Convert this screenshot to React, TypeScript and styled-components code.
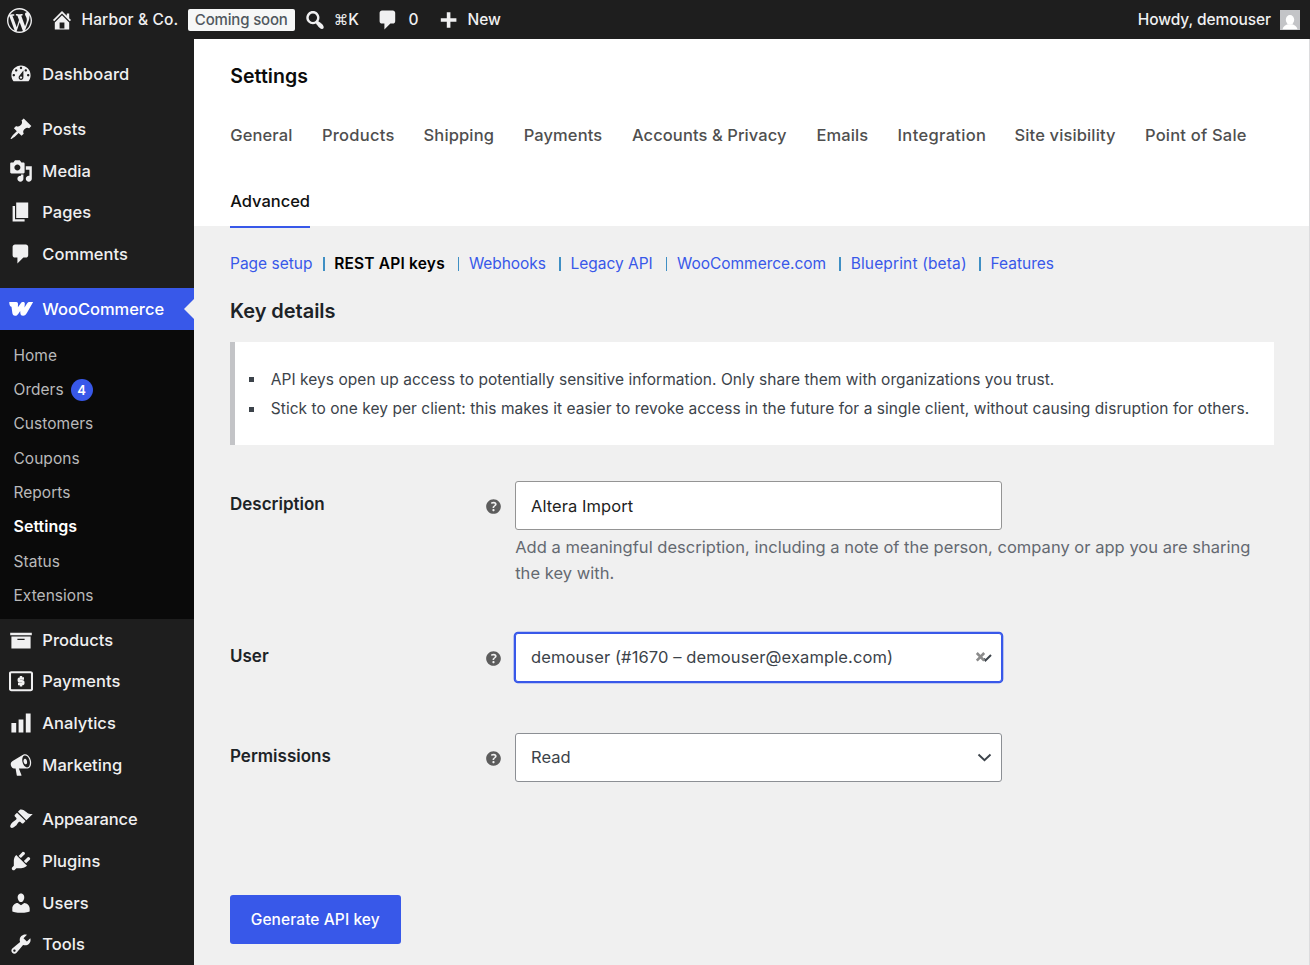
import React from 'react';
import styled, { createGlobalStyle, css } from 'styled-components';

const GlobalStyle = createGlobalStyle`
  *, *::before, *::after { box-sizing: border-box; }
  body {
    margin: 0;
    background: #f0f0f0;
    color: #3c434a;
    font-family: Inter, "Liberation Sans", "DejaVu Sans", sans-serif;
    font-size: 16px;
    -webkit-font-smoothing: antialiased;
  }
  ul { list-style: none; margin: 0; padding: 0; }
  h1, h2, p { margin: 0; }
  a { color: inherit; text-decoration: none; }
`;

/* ---------- icons ---------- */

const paths = {
  wordpress:
    'M20 10c0-5.51-4.49-10-10-10C4.48 0 0 4.49 0 10c0 5.52 4.48 10 10 10 5.51 0 10-4.48 10-10zM7.78 15.37L4.37 6.22c.55-.02 1.17-.08 1.17-.08.5-.06.44-1.13-.06-1.11 0 0-1.45.11-2.37.11-.18 0-.37 0-.58-.01C4.12 2.69 6.87 1.11 10 1.11c2.33 0 4.45.87 6.05 2.34-.68-.11-1.65.39-1.65 1.58 0 .74.45 1.36.9 2.1.35.61.55 1.36.55 2.46 0 1.49-1.4 5-1.4 5l-3.03-8.37c.54-.02.82-.17.82-.17.5-.05.44-1.25-.06-1.22 0 0-1.44.12-2.38.12-.87 0-2.33-.12-2.33-.12-.5-.03-.56 1.2-.06 1.22l.92.08 1.26 3.41zM17.41 10c.24-.64.74-1.87.43-4.25.7 1.29 1.05 2.71 1.05 4.25 0 3.29-1.73 6.24-4.4 7.78.97-2.59 1.94-5.2 2.92-7.78zM6.1 18.09C3.12 16.65 1.11 13.53 1.11 10c0-1.3.23-2.48.72-3.59C3.25 10.3 4.67 14.2 6.1 18.09zm4.03-6.63l2.58 6.98c-.86.29-1.76.45-2.71.45-.79 0-1.57-.11-2.29-.33.81-2.38 1.62-4.74 2.42-7.1z',
  home: 'M16 8.5l1.53 1.53-1.06 1.06L10 4.6l-6.47 6.49-1.06-1.06L10 2.5l4 4v-2h2v4zm-6-2.46l6 5.99V18H4v-5.97zM12 17v-5H8v5h4z',
  search:
    'M12.14 4.18c1.87 1.87 2.11 4.75.72 6.89.12.1.22.21.36.31.2.16.47.36.81.59.34.24.56.39.66.47.42.31.73.57.94.78.32.32.6.65.84 1 .25.35.44.69.59 1.04.14.35.21.68.18 1-.02.32-.14.59-.36.81s-.49.34-.81.36c-.31.02-.65-.04-.99-.19-.35-.14-.7-.34-1.04-.59-.35-.24-.68-.52-1-.84-.21-.21-.47-.52-.77-.93-.1-.13-.25-.35-.47-.66-.22-.32-.4-.57-.56-.78-.16-.2-.29-.35-.44-.5-2.07 1.09-4.69.76-6.44-.98-2.14-2.15-2.14-5.64 0-7.78 2.15-2.15 5.63-2.15 7.78 0zm-1.41 6.36c1.36-1.37 1.36-3.58 0-4.95-1.37-1.37-3.59-1.37-4.95 0-1.37 1.37-1.37 3.58 0 4.95 1.36 1.37 3.58 1.37 4.95 0z',
  comments: 'M5 2h9c1.1 0 2 .9 2 2v7c0 1.1-.9 2-2 2h-2l-5 5v-5H5c-1.1 0-2-.9-2-2V4c0-1.1.9-2 2-2z',
  plus: 'M17 8.5v3h-5v5H9v-5H4v-3h5v-5h3v5h5z',
  dashboard:
    'M3.76 16h12.48c1.1-1.37 1.76-3.11 1.76-5 0-4.42-3.58-8-8-8s-8 3.58-8 8c0 1.89.66 3.63 1.76 5zM10 4c.55 0 1 .45 1 1s-.45 1-1 1-1-.45-1-1 .45-1 1-1zM6 6c.55 0 1 .45 1 1s-.45 1-1 1-1-.45-1-1 .45-1 1-1zm8 0c.55 0 1 .45 1 1s-.45 1-1 1-1-.45-1-1 .45-1 1-1zm-5.37 5.55L12 7v6c0 1.1-.9 2-2 2s-2-.9-2-2c0-.57.24-1.08.63-1.45zM4 10c.55 0 1 .45 1 1s-.45 1-1 1-1-.45-1-1 .45-1 1-1zm12 0c.55 0 1 .45 1 1s-.45 1-1 1-1-.45-1-1 .45-1 1-1zm-5 3c0-.55-.45-1-1-1s-1 .45-1 1 .45 1 1 1 1-.45 1-1z',
  posts:
    'M10.44 3.02l1.82-1.82 6.36 6.35-1.83 1.82c-1.05-.68-2.48-.57-3.41.36l-.75.75c-.92.93-1.04 2.35-.35 3.41l-1.83 1.82-2.41-2.41-2.8 2.79c-.42.42-3.38 2.71-3.8 2.29s1.86-3.39 2.28-3.81l2.79-2.79L4.1 9.36l1.83-1.82c1.05.69 2.48.57 3.4-.36l.75-.75c.93-.92 1.05-2.35.36-3.41z',
  media:
    'M13 11V4c0-.55-.45-1-1-1h-1.67L9 1H5L3.67 3H2c-.55 0-1 .45-1 1v7c0 .55.45 1 1 1h10c.55 0 1-.45 1-1zM7 4.5c1.38 0 2.5 1.12 2.5 2.5S8.38 9.5 7 9.5 4.5 8.38 4.5 7 5.62 4.5 7 4.5zM14 6h5v10.5c0 1.38-1.12 2.5-2.5 2.5S14 17.88 14 16.5s1.12-2.5 2.5-2.5c.17 0 .34.02.5.05V9h-3V6zm-4 8.05V13h2v3.5c0 1.38-1.12 2.5-2.5 2.5S7 17.88 7 16.5 8.12 14 9.5 14c.17 0 .34.02.5.05z',
  pages: 'M6 15V2h10v13H6zm-1 1h8v2H3V5h2v11z',
  products: 'M19 4v2H1V4h18zM2 7h16v10H2V7zm11 3V9H7v1h6z',
  analytics: 'M18 18V2h-4v16h4zm-6 0V7H8v11h4zm-6 0v-8H2v8h4z',
  marketing:
    'M18.15 5.94c.46 1.62.38 3.22-.02 4.48-.42 1.28-1.26 2.18-2.3 2.48-.16.06-.26.06-.4.06-.06.02-.12.02-.18.02-.06.02-.14.02-.22.02h-6.8l2.22 5.5c.02.14-.06.26-.14.34-.08.1-.24.16-.34.16H6.95c-.1 0-.26-.06-.34-.16-.08-.08-.16-.2-.14-.34l-1-5.5H4.25l-.02-.02c-.5.06-1.08-.18-1.54-.62s-.88-1.08-1.06-1.88c-.24-.8-.2-1.56-.02-2.2.18-.62.58-1.08 1.06-1.3l.02-.02 9-5.4c.1-.06.18-.1.24-.16.06-.04.14-.08.24-.12.16-.08.28-.12.5-.18 1.04-.3 2.24.1 3.22.98s1.84 2.24 2.26 3.86zm-2.58 5.98h-.02c.4-.1.74-.34 1.04-.7.58-.7.86-1.76.86-3.04 0-.64-.1-1.3-.28-1.98-.34-1.36-1.02-2.5-1.78-3.24s-1.68-1.1-2.46-.88c-.82.22-1.4.96-1.7 2-.32 1.04-.28 2.36.06 3.72.38 1.36 1 2.5 1.8 3.24.78.74 1.62 1.1 2.48.88zm-2.54-7.08c.22-.04.42-.02.62.04.38.16.76.48 1.02 1s.42 1.2.42 1.78c0 .3-.04.56-.12.8-.18.48-.44.84-.86.94-.34.1-.8-.06-1.14-.4s-.64-.86-.78-1.5c-.18-.62-.12-1.24.02-1.72s.48-.84.82-.94z',
  appearance:
    'M14.48 11.06L7.41 3.99l1.5-1.5c.5-.56 2.3-.47 3.51.32 1.21.8 1.43 1.28 2.91 2.1 1.18.64 2.45 1.26 4.45.85zm-.71.71L6.7 4.7 4.93 6.47c-.39.39-.39 1.02 0 1.41l1.06 1.06c.39.39.39 1.03 0 1.42-.6.6-1.43 1.11-2.21 1.69-.35.26-.7.53-1.01.84C1.43 14.23.4 16.08 1.4 17.07c.99 1 2.84-.03 4.18-1.36.31-.31.58-.66.85-1.02.57-.78 1.08-1.61 1.69-2.21.39-.39 1.02-.39 1.41 0l1.06 1.06c.39.39 1.02.39 1.41 0z',
  plugins:
    'M13.11 4.36L9.87 7.6 8 5.73l3.24-3.24c.35-.34 1.05-.2 1.56.32.52.51.66 1.21.31 1.55zm-8 1.77l.91-1.12 9.01 9.01-1.19.84c-.71.71-2.63 1.16-3.82 1.16H6.14L4.9 17.26c-.59.59-1.54.59-2.12 0-.59-.58-.59-1.53 0-2.12l1.24-1.24v-3.88c0-1.13.4-3.19 1.09-3.89zm7.26 3.97l3.24-3.24c.34-.35 1.04-.21 1.55.31.52.51.66 1.21.31 1.55l-3.24 3.25z',
  users:
    'M10 9.25c-2.27 0-2.73-3.44-2.73-3.44C7 4.02 7.82 2 9.97 2c2.16 0 2.98 2.02 2.71 3.81 0 0-.41 3.44-2.68 3.44zm0 2.57L12.72 10c2.39 0 4.52 2.33 4.52 4.53v2.49s-3.65 1.13-7.24 1.13c-3.65 0-7.24-1.13-7.24-1.13v-2.49c0-2.25 1.94-4.48 4.47-4.48z',
  tools:
    'M16.68 9.77c-1.34 1.34-3.3 1.67-4.95.99l-5.41 6.52c-.99.99-2.59.99-3.58 0s-.99-2.59 0-3.57l6.52-5.42c-.68-1.65-.35-3.61.99-4.95 1.28-1.28 3.12-1.62 4.72-1.06l-2.89 2.89 2.82 2.82 2.86-2.87c.53 1.58.18 3.39-1.08 4.65zM3.81 16.21c.4.39 1.04.39 1.43 0 .4-.4.4-1.04 0-1.43-.39-.4-1.03-.4-1.43 0-.39.39-.39 1.03 0 1.43z',
  help: 'M17 10c0-3.87-3.14-7-7-7-3.87 0-7 3.13-7 7s3.13 7 7 7c3.86 0 7-3.13 7-7zm-6.3 1.48H9.14v-.43c0-.38.08-.7.24-.98s.46-.57.88-.89c.41-.29.68-.53.81-.71.14-.18.2-.39.2-.62 0-.25-.09-.44-.28-.58-.19-.13-.45-.19-.79-.19-.58 0-1.25.15-2 .46l-.64-1.28c.87-.49 1.8-.74 2.77-.74.81 0 1.45.2 1.92.58.48.39.71.91.71 1.55 0 .43-.09.8-.29 1.11-.19.32-.57.67-1.11 1.06-.38.28-.61.49-.71.63-.1.15-.15.34-.15.57v.46zm-1.47 2.72c-.18-.17-.27-.42-.27-.73 0-.33.08-.58.26-.75s.43-.25.77-.25c.32 0 .57.09.75.26s.27.42.27.74c0 .3-.09.55-.27.72-.18.18-.43.27-.75.27-.33 0-.58-.09-.76-.26z',
};

type PathName = keyof typeof paths;
type IconName = PathName | 'woo' | 'payments';

const Svg = styled.svg`
  display: block;
  flex: none;
`;

function Icon({ name, size = 24 }: { name: IconName; size?: number }) {
  if (name === 'woo') {
    return (
      <Svg width={size} height={size} viewBox="0 0 24 24" fill="#fff">
        <path d="M.3 5H7.200C8.500 5 9 5.800 9 7L8.900 10.200 11.800 6.200C12.500 5.200 13.200 5 14.200 5 15.400 5 15.900 5.700 15.800 6.800L15.500 10.500 18.200 6.300C18.800 5.300 19.600 5 20.600 5H24.200L18 15.800C16.900 17.700 15.900 18.800 14.100 18.800 12.200 18.800 11.400 17.700 11.300 15.600L11.200 13.900 9.200 16.900C8.300 18.200 7.400 18.800 6.100 18.800 4.400 18.800 3.600 17.800 3.300 15.800L2.500 9.800H2.200C.8 9.300.2 7.500.3 5z" />
      </Svg>
    );
  }
  if (name === 'payments') {
    return (
      <Svg width={size} height={size} viewBox="0 0 24 24" fill="none" stroke="#f0f0f1">
        <rect x="1" y="3.2" width="22" height="18" rx="1.4" strokeWidth="2.1" />
        <path d="M15 9.500H11.100a1.350 1.350 0 0 0 0 2.750h1.900a1.350 1.350 0 0 1 0 2.750H9M12 7v2.200M12 15.200v2.200" strokeWidth="2.400" />
      </Svg>
    );
  }
  return (
    <Svg width={size} height={size} viewBox="0 0 20 20" fill="currentColor">
      <path d={paths[name]} />
    </Svg>
  );
}

/* ---------- admin bar ---------- */

const AdminBar = styled.header`
  display: flex;
  align-items: center;
  height: 39px;
  padding: 1px 10.5px 0 7px;
  background: #1e1e1e;
  color: #f0f0f1;
  font-size: 15.5px;
  font-weight: 450;
  line-height: 38px;
`;

const BarItem = styled.div<{ $left: number; $gap?: number; $track?: number }>`
  display: flex;
  align-items: center;
  gap: ${(p) => p.$gap ?? 0}px;
  margin-left: ${(p) => p.$left}px;
  letter-spacing: ${(p) => p.$track ?? 0}px;
  white-space: nowrap;
`;

const BarEnd = styled.div`
  display: flex;
  align-items: center;
  gap: 8.5px;
  margin-left: auto;
  letter-spacing: -0.08px;
`;

const SiteStatus = styled.span`
  width: 107px;
  height: 22px;
  margin-left: 9.5px;
  border-radius: 2px;
  background: #f6f7f7;
  color: #50575e;
  font-size: 15px;
  font-weight: 500;
  line-height: 22px;
  letter-spacing: -0.17px;
  text-align: center;
`;

const Command = styled.span`
  font-family: "DejaVu Sans", sans-serif;
  font-size: 14.5px;
`;

const Avatar = styled.svg`
  display: block;
  margin-top: -1px;
`;

/* ---------- side menu ---------- */

const Shell = styled.div`
  width: 1310px;
  height: 965px;
  overflow: hidden;
  display: flex;
  flex-direction: column;
`;

const Body = styled.div`
  display: flex;
  flex: 1;
  min-height: 0;
`;

const SideMenu = styled.nav`
  flex: none;
  width: 193.5px;
  height: 926px;
  overflow: hidden;
  padding-top: 14.4px;
  background: #1e1e1e;
  color: #f0f0f1;
`;

const MenuGroup = styled.ul`
  & + & { margin-top: 13.3px; }
`;

const MenuLink = styled.a<{ $active?: boolean; $track?: number }>`
  position: relative;
  display: flex;
  align-items: center;
  gap: 9.8px;
  height: 41.67px;
  padding-left: 8.5px;
  font-size: 16.5px;
  font-weight: 450;
  letter-spacing: ${(p) => p.$track ?? 0.04}px;
  ${(p) =>
    p.$active &&
    css`
      background: #3858e9;
      color: #fff;
      &::after {
        content: "";
        position: absolute;
        right: 0;
        top: 50%;
        margin-top: -10px;
        border: 10px solid transparent;
        border-left-width: 0;
        border-right-color: #f0f0f0;
      }
    `}
`;

const SubMenu = styled.ul`
  padding: 8px 0 6.2px;
  background: #0a0a0a;
`;

const SubLink = styled.a<{ $current?: boolean }>`
  display: flex;
  align-items: center;
  gap: 7px;
  height: 34.33px;
  padding-left: 13.5px;
  padding-bottom: ${(p) => (p.$current ? 2 : 0)}px;
  color: ${(p) => (p.$current ? '#fff' : '#b9b9ba')};
  font-size: ${(p) => (p.$current ? 16 : 15.5)}px;
  font-weight: ${(p) => (p.$current ? 600 : 400)};
  letter-spacing: 0.03px;
`;

const Count = styled.span`
  display: grid;
  place-items: center;
  width: 22px;
  height: 22px;
  margin-top: 1px;
  border-radius: 50%;
  background: #3858e9;
  color: #fff;
  font-size: 13px;
  font-weight: 600;
`;

/* ---------- content ---------- */

const Content = styled.main`
  flex: 1;
  min-width: 0;
  border-right: 1px solid #dcdcde;
`;

const PageHeader = styled.div`
  height: 187px;
  padding: 21px 36px 0 36.8px;
  background: #fff;
`;

const PageTitle = styled.h1`
  height: 42px;
  color: #0b0b0b;
  font-size: 19.5px;
  font-weight: 600;
  line-height: 32px;
  letter-spacing: 0.05px;
`;

const Tabs = styled.div`
  display: flex;
  flex-wrap: wrap;
  column-gap: 29.3px;
`;

const Tab = styled.a<{ $active?: boolean; $width: number; $track: number }>`
  width: ${(p) => p.$width}px;
  height: 66px;
  color: ${(p) => (p.$active ? '#111' : '#4f4f4f')};
  font-size: 16.5px;
  font-weight: 500;
  line-height: 66px;
  letter-spacing: ${(p) => p.$track}px;
  white-space: nowrap;
  ${(p) =>
    p.$active &&
    css`
      height: 59.5px;
      border-bottom: 2.5px solid #3858e9;
    `}
`;

const Page = styled.div`
  padding: 23px 35.5px 0 36.5px;
`;

const Sections = styled.div`
  display: flex;
  height: 30px;
  color: #3858e9;
  font-size: 15.5px;
  line-height: 30px;
  white-space: nowrap;
`;

const SectionLink = styled.a<{ $current?: boolean; $width: number; $track: number }>`
  width: ${(p) => p.$width}px;
  letter-spacing: ${(p) => p.$track}px;
  ${(p) => p.$current && css`color: #000; font-weight: 600;`}
`;

const Divider = styled.span`
  width: 1.6px;
  height: 14px;
  margin: 8px 9.6px 0 0;
  background: #3f8fc4;
`;

const Heading = styled.h2`
  margin-top: 20px;
  color: #1d2327;
  font-size: 20px;
  font-weight: 600;
  line-height: 24px;
  letter-spacing: -0.04px;
`;

const Notice = styled.ul`
  height: 103px;
  margin-top: 19px;
  padding: 22.500px 0 0 14px;
  border-left: 5px solid #c3c4c7;
  background: #fff;
`;

const NoticeItem = styled.li`
  display: flex;
  align-items: center;
  gap: 16.8px;
  height: 29.6px;
  font-size: 15.5px;
  letter-spacing: 0.046px;
  white-space: nowrap;
  &::before {
    content: "";
    width: 5px;
    height: 5px;
    margin-top: 1px;
    background: #3c434a;
  }
`;

const Field = styled.div<{ $top: number }>`
  display: grid;
  grid-template-columns: 253px 31.7px 1fr;
  margin-top: ${(p) => p.$top}px;
`;

const Label = styled.label`
  height: 47px;
  color: #1d2327;
  font-size: 17px;
  font-weight: 600;
  line-height: 47.5px;
`;

const HelpTip = styled.span`
  height: 49px;
  padding-top: 14.600px;
  color: #5d5d5d;
`;

const Control = styled.div`
  display: flex;
  align-items: center;
  justify-content: space-between;
  width: 487px;
  height: 49px;
  padding: 0 9px 0 15.3px;
  border: 1px solid #8c8f94;
  border-radius: 3px;
  background: #fff;
  font-size: 16.5px;
  letter-spacing: 0.07px;
`;

const TextInput = styled(Control)`
  color: #1e1e1e;
  border-color: #949494;
`;

const FocusedSelect = styled(Control)`
  border-color: #3858e9;
  box-shadow: 0 0 0 1.3px #3858e9;
  letter-spacing: 0.106px;
`;

const Hint = styled.p`
  padding: 5px 0 0 0.5px;
  color: #646970;
  font-size: 16.5px;
  line-height: 25.6px;
  letter-spacing: 0.022px;
`;

const Submit = styled.button`
  display: block;
  width: 170.5px;
  height: 49px;
  margin-top: 113px;
  padding: 0;
  border: 0;
  border-radius: 3px;
  background: #3858e9;
  color: #fff;
  font: 500 15.5px Inter, sans-serif;
  letter-spacing: 0.09px;
`;

type MenuEntry = { icon: IconName; label: string; track?: number };

const contentMenu: MenuEntry[] = [
  { icon: 'posts', label: 'Posts' },
  { icon: 'media', label: 'Media' },
  { icon: 'pages', label: 'Pages' },
  { icon: 'comments', label: 'Comments' },
];
const storeMenu: MenuEntry[] = [
  { icon: 'products', label: 'Products' },
  { icon: 'payments', label: 'Payments' },
  { icon: 'analytics', label: 'Analytics' },
  { icon: 'marketing', label: 'Marketing' },
];
const siteMenu: MenuEntry[] = [
  { icon: 'appearance', label: 'Appearance', track: -0.09 },
  { icon: 'plugins', label: 'Plugins' },
  { icon: 'users', label: 'Users' },
  { icon: 'tools', label: 'Tools' },
];
const wooMenu = ['Home', 'Orders', 'Customers', 'Coupons', 'Reports', 'Settings', 'Status', 'Extensions'];

const tabs: [string, number, number][] = [
  ['General', 62.3, 0.1],
  ['Products', 72.4, 0.25],
  ['Shipping', 70.8, 0.13],
  ['Payments', 79, 0.1],
  ['Accounts & Privacy', 155.3, 0.08],
  ['Emails', 51.7, 0.1],
  ['Integration', 87.7, 0.33],
  ['Site visibility', 101.2, 0.13],
  ['Point of Sale', 101, 0.2],
  ['Advanced', 79.5, -0.04],
];

const sections: [string, number, number][] = [
  ['Page setup', 93, 0],
  ['REST API keys', 123.5, 0.19],
  ['Webhooks', 90.5, -0.05],
  ['Legacy API', 95.2, -0.03],
  ['WooCommerce.com', 162.5, -0.02],
  ['Blueprint (beta)', 128.600, 0.15],
  ['Features', 70, 0.02],
];

function MenuRow({ icon, label, track }: MenuEntry) {
  return (
    <li>
      <MenuLink href="#" $track={track}>
        <Icon name={icon} />
        {label}
      </MenuLink>
    </li>
  );
}

function Help() {
  return (
    <HelpTip>
      <Icon name="help" size={21} />
    </HelpTip>
  );
}

export default function App() {
  return (
    <Shell>
      <GlobalStyle />
      <AdminBar>
        <Icon name="wordpress" size={25} />
        <BarItem $left={18} $gap={7.5} $track={0.12}>
          <Icon name="home" />
          Harbor &amp; Co.
        </BarItem>
        <SiteStatus>Coming soon</SiteStatus>
        <BarItem $left={8} $gap={7}>
          <Icon name="search" />
          <span><Command>⌘</Command>K</span>
        </BarItem>
        <BarItem $left={17.5} $gap={8}>
          <Icon name="comments" />0
        </BarItem>
        <BarItem $left={17.5} $gap={7.5}>
          <Icon name="plus" />
          New
        </BarItem>
        <BarEnd>
          Howdy, demouser
          <Avatar width="20" height="20" viewBox="0 0 20 20">
            <rect width="20" height="20" fill="#c3c4c7" />
            <ellipse cx="10" cy="9.8" rx="4.200" ry="4.800" fill="#fff" />
            <path d="M2.500 19.200c.6-3 3.600-4.300 5.400-4.900h4.200c1.800.6 4.800 1.900 5.400 4.900z" fill="#fff" />
          </Avatar>
        </BarEnd>
      </AdminBar>
      <Body>
        <SideMenu>
          <MenuGroup>
            <MenuRow icon="dashboard" label="Dashboard" track={0.12} />
          </MenuGroup>
          <MenuGroup>
            {contentMenu.map((m) => <MenuRow key={m.label} {...m} />)}
          </MenuGroup>
          <MenuGroup>
            <li>
              <MenuLink href="#" $active $track={-0.02}>
                <Icon name="woo" />
                WooCommerce
              </MenuLink>
              <SubMenu>
                {wooMenu.map((label) => (
                  <li key={label}>
                    <SubLink href="#" $current={label === 'Settings'}>
                      {label}
                      {label === 'Orders' && <Count>4</Count>}
                    </SubLink>
                  </li>
                ))}
              </SubMenu>
            </li>
            {storeMenu.map((m) => <MenuRow key={m.label} {...m} />)}
          </MenuGroup>
          <MenuGroup>
            {siteMenu.map((m) => <MenuRow key={m.label} {...m} />)}
          </MenuGroup>
        </SideMenu>
        <Content>
          <PageHeader>
            <PageTitle>Settings</PageTitle>
            <Tabs>
              {tabs.map(([label, width, track]) => (
                <Tab key={label} href="#" $width={width} $track={track} $active={label === 'Advanced'}>
                  {label}
                </Tab>
              ))}
            </Tabs>
          </PageHeader>
          <Page>
            <Sections>
              {sections.map(([label, width, track], i) => (
                <React.Fragment key={label}>
                  {i > 0 && <Divider />}
                  <SectionLink href="#" $width={width} $track={track} $current={i === 1}>
                    {label}
                  </SectionLink>
                </React.Fragment>
              ))}
            </Sections>
            <Heading>Key details</Heading>
            <Notice>
              <NoticeItem>
                API keys open up access to potentially sensitive information. Only share them with organizations you trust.
              </NoticeItem>
              <NoticeItem>
                Stick to one key per client: this makes it easier to revoke access in the future for a single client, without causing disruption for others.
              </NoticeItem>
            </Notice>
            <Field $top={36}>
              <Label>Description</Label>
              <Help />
              <div>
                <TextInput>Altera Import</TextInput>
                <Hint>
                  Add a meaningful description, including a note of the person, company or app you are sharing
                  <br />
                  the key with.
                </Hint>
              </div>
            </Field>
            <Field $top={46.8}>
              <Label>User</Label>
              <Help />
              <FocusedSelect>
                demouser (#1670 – demouser@example.com)
                <Svg width="18" height="16" viewBox="0 0 18 16" fill="none">
                  <path d="M10 9.500l1.500 2 5.500-5.500" stroke="#3c434a" strokeWidth="2" />
                  <path d="M2.800 4l7.400 7.600M10.200 4L2.800 11.600" stroke="#8b8b8b" strokeWidth="2.600" />
                </Svg>
              </FocusedSelect>
            </Field>
            <Field $top={51}>
              <Label>Permissions</Label>
              <Help />
              <Control>
                Read
                <Svg width="15" height="10" viewBox="0 0 15 10" fill="none" stroke="#3c434a" strokeWidth="1.900">
                  <path d="M1.500 2.500l6 5.800 6-5.800" />
                </Svg>
              </Control>
            </Field>
            <Submit type="button">Generate API key</Submit>
          </Page>
        </Content>
      </Body>
    </Shell>
  );
}
